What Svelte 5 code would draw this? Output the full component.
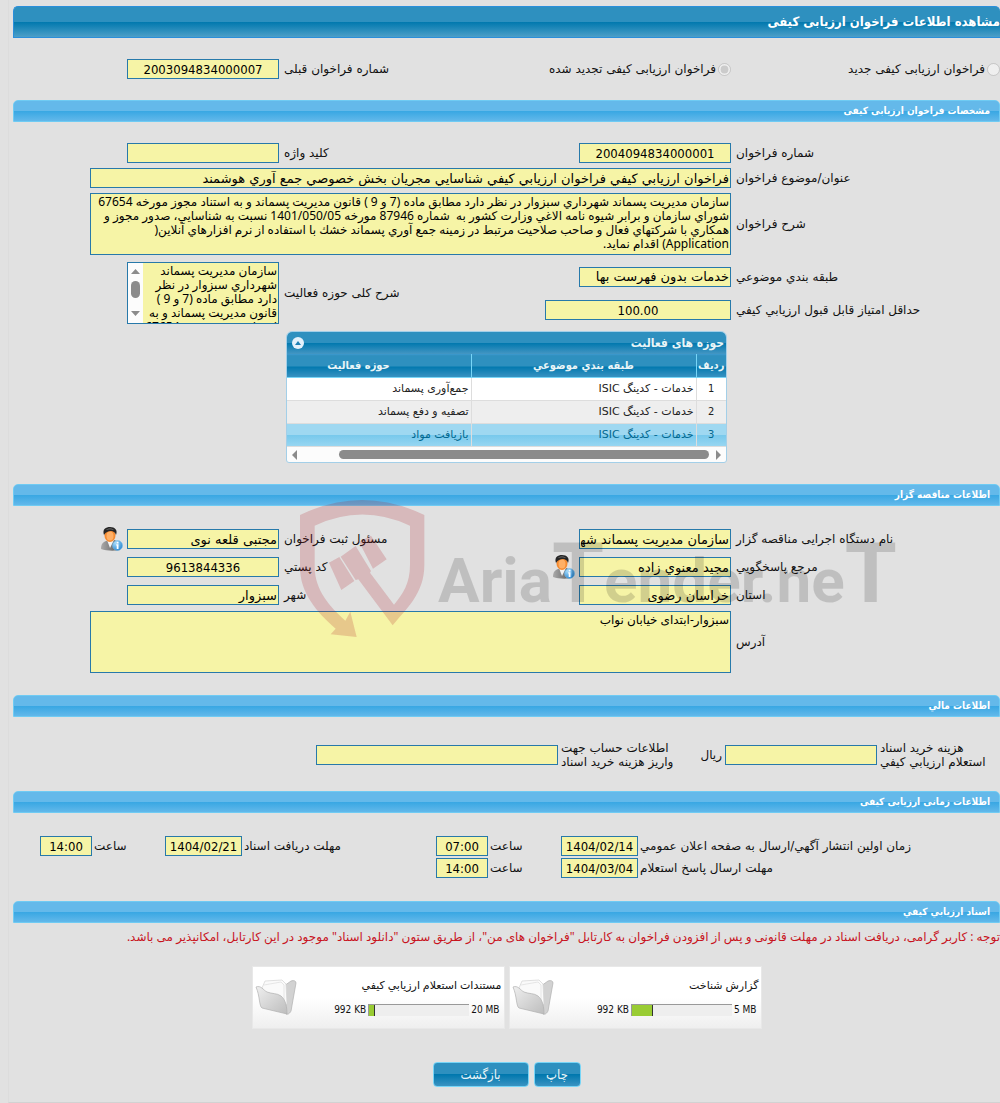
<script>
	let selectedRow = $state(3);
	let gridOpen = $state(true);

	const subject = 'فراخوان ارزيابي كيفي فراخوان ارزيابي كيفي شناسايي مجريان بخش خصوصي جمع آوري هوشمند';

	const description = [
		'سازمان مديريت پسماند شهرداري سبزوار در نظر دارد مطابق ماده (7 و 9 ) قانون مديريت پسماند و به استناد مجوز مورخه 67654',
		'شوراي سازمان و برابر شيوه نامه الاغي وزارت كشور به  شماره 87946 مورخه 1401/050/05 نسبت به شناسايي، صدور مجوز و',
		'همكاري با شركتهاي فعال و صاحب صلاحيت مرتبط در زمينه جمع آوري پسماند خشك با استفاده از نرم افزارهاي آنلاين(',
		'Application) اقدام نمايد.'
	].join('\n');

	const scope = [
		'سازمان مديريت پسماند',
		'شهرداري سبزوار در نظر',
		'دارد مطابق ماده (7 و 9 )',
		'قانون مديريت پسماند و به',
		'استناد مجوز مورخه 67654'
	].join('\n');

	const activities = [
		{ id: 1, category: 'خدمات - کدینگ ISIC', field: 'جمع‌آوری پسماند' },
		{ id: 2, category: 'خدمات - کدینگ ISIC', field: 'تصفیه و دفع پسماند' },
		{ id: 3, category: 'خدمات - کدینگ ISIC', field: 'بازیافت مواد' }
	];

	const files = [
		{ title: 'گزارش شناخت', used: '992 KB', max: '5 MB', percent: 21 },
		{ title: 'مستندات استعلام ارزيابي كيفي', used: '992 KB', max: '20 MB', percent: 6 }
	];
</script>

{#snippet userIcon(id)}
	<svg class="user-icon" viewBox="0 0 22 24" aria-hidden="true">
		<defs>
			<linearGradient id="suit-{id}" x1="0" x2="1">
				<stop offset="0" stop-color="#aaa" />
				<stop offset="1" stop-color="#555" />
			</linearGradient>
			<radialGradient id="info-{id}" cx="0.3" cy="0.25" r="0.9">
				<stop offset="0" stop-color="#a9dcfa" />
				<stop offset="1" stop-color="#1f80cf" />
			</radialGradient>
		</defs>
		<path d="M0 22c0-5 2-7 5-8l8-1c4 1 6 4 6 10-5 1-14 1-19-1z" fill="url(#suit-{id})" />
		<path d="M6 13l3 8 4-8z" fill="#f4f4f4" />
		<ellipse cx="9" cy="8.500" rx="5.500" ry="6.500" fill="#f58a2f" />
		<ellipse cx="9" cy="9" rx="3.500" ry="4.500" fill="#ffb066" />
		<path d="M3 8C1 2 5 0 9 0c5 0 8 3 6 8-1-3-3-4-5-4-3 0-5 1-7 4z" fill="#262626" />
		<path d="M5 3c2-2 6-2 8 0-3-1-5-1-8 0z" fill="#777" />
		<circle cx="16.500" cy="18.500" r="5" fill="url(#info-{id})" stroke="#6db9ea" stroke-width="0.500" />
		<path d="M15.700 14.800h1.800v1.600h-1.800zM15.200 17.200h2.300v4.800h-1.800v-3.600h-.5z" fill="#fff" />
	</svg>
{/snippet}

<main dir="rtl">
	<h1>مشاهده اطلاعات فراخوان ارزیابی کیفی</h1>

	<div class="form kind">
		<div class="radio edge">
			<input type="radio" id="kind-new" name="kind" disabled />
			<label for="kind-new">فراخوان ارزیابی کیفی جدید</label>
		</div>
		<div class="radio">
			<input type="radio" id="kind-renewed" name="kind" checked disabled />
			<label for="kind-renewed">فراخوان ارزیابی کیفی تجدید شده</label>
		</div>
		<label for="prev-number">شماره فراخوان قبلی</label>
		<input class="num" id="prev-number" value="2003094834000007" readonly />
	</div>

	<section>
		<h2>مشخصات فراخوان ارزیابی کیفی</h2>
		<div class="form details">
			<label for="number">شماره فراخوان</label>
			<input class="num" id="number" value="2004094834000001" readonly />
			<label for="keyword">کلید واژه</label>
			<input id="keyword" value="" readonly />

			<label for="subject">عنوان/موضوع فراخوان</label>
			<input class="full" id="subject" value={subject} readonly />

			<label for="description">شرح فراخوان</label>
			<textarea class="full" id="description" value={description} readonly></textarea>
		</div>

		<div class="form scope">
			<label for="category">طبقه بندي موضوعي</label>
			<input id="category" value="خدمات بدون فهرست بها" readonly />
			<label class="tall" for="scope">شرح کلی حوزه فعالیت</label>
			<div class="scroll-box tall">
				<textarea id="scope" value={scope} readonly></textarea>
				<svg class="v-scroll" viewBox="0 0 15 60" aria-hidden="true">
					<path d="M3 11l4.500-5 4.500 5zM3 48l4.500 5 4.500-5z" fill="#8b8b8b" />
					<rect x="3" y="18" width="9" height="17" rx="4.500" fill="#8b8b8b" />
				</svg>
			</div>

			<label for="min-score">حداقل امتیاز قابل قبول ارزیابي کیفي</label>
			<input class="num wide" id="min-score" value="100.00" readonly />
		</div>

		<div class="panel">
			<div class="panel-title">
				<span>حوزه های فعالیت</span>
				<button class="toggle" aria-label="بستن" onclick={() => (gridOpen = !gridOpen)}>
					<svg viewBox="0 0 12 12"><path d="M3 8l3-4 3 4z" fill="#1d7fb4" /></svg>
				</button>
			</div>
			{#if gridOpen}
				<div class="table-view">
					<table>
						<colgroup>
							<col class="c-row" />
							<col class="c-wide" />
							<col class="c-wide" />
						</colgroup>
						<thead>
							<tr>
								<th>ردیف</th>
								<th>طبقه بندي موضوعي</th>
								<th>حوزه فعالیت</th>
							</tr>
						</thead>
						<tbody>
							{#each activities as item (item.id)}
								<tr class:selected={selectedRow === item.id} onclick={() => (selectedRow = item.id)}>
									<td class="center">{item.id}</td>
									<td>{item.category}</td>
									<td>{item.field}</td>
								</tr>
							{/each}
						</tbody>
					</table>
				</div>
				<div class="h-scroll">
					<i class="arrow right"></i>
					<div class="track"><div class="thumb"></div></div>
					<i class="arrow left"></i>
				</div>
			{/if}
		</div>
	</section>

	<section class="tender">
		<h2>اطلاعات مناقصه گزار</h2>
		<div class="form owner">
			<label for="org">نام دستگاه اجرایی مناقصه گزار</label>
			<input id="org" value="سازمان مدیریت پسماند شهرداری سبزوار" readonly />
			<label for="registrar">مسئول ثبت فراخوان</label>
			<div class="with-icon">
				<input id="registrar" value="مجتبی قلعه نوی" readonly />
				{@render userIcon('registrar')}
			</div>

			<label for="contact">مرجع پاسخگویي</label>
			<div class="with-icon">
				<input id="contact" value="مجید معنوي زاده" readonly />
				{@render userIcon('contact')}
			</div>
			<label for="postal">کد پستي</label>
			<input class="num" id="postal" value="9613844336" readonly />

			<label for="province">استان</label>
			<input id="province" value="خراسان رضوی" readonly />
			<label for="city">شهر</label>
			<input id="city" value="سبزوار" readonly />

			<label for="address">آدرس</label>
			<textarea class="full" id="address" value="سبزوار-ابتدای خیابان نواب" readonly></textarea>
		</div>

		<svg class="watermark" viewBox="0 0 630 150" aria-hidden="true">
			<g transform="scale(0.3333)" fill="#b01825" fill-opacity="0.2">
				<path d="M30 75Q217-15 403 75V225C403 310 350 355 308 406L205 268 197 270 152 200 197 168 243 243 240 248 312 344C340 310 360 280 360 225V107Q217 40 74 107V230C74 300 120 350 166 392L181 365 200 441 122 433 137 416C80 365 30 310 30 230Z" />
				<path d="M117 218l31-17 45 72-39 27zM207 155l36-18 47 71-41 28z" />
			</g>
			<text x="148" y="112">Aria<tspan class="big">T</tspan>ender.ne<tspan class="big">T</tspan></text>
		</svg>
	</section>

	<section>
		<h2>اطلاعات مالي</h2>
		<div class="finance">
			<label for="doc-cost">هزینه خرید اسناد<br />استعلام ارزیابي کیفي</label>
			<input id="doc-cost" value="" readonly />
			<span class="unit">ریال</span>
			<label for="account">اطلاعات حساب جهت<br />واریز هزینه خرید اسناد</label>
			<input class="account" id="account" value="" readonly />
		</div>
	</section>

	<section>
		<h2>اطلاعات زمانی ارزیابی کیفی</h2>
		<div class="dates">
			<label for="publish-date">زمان اولین انتشار آگهي/ارسال به صفحه اعلان عمومي</label>
			<input class="num" id="publish-date" value="1404/02/14" readonly />
			<label for="publish-time">ساعت</label>
			<input class="num" id="publish-time" value="07:00" readonly />
			<label for="receive-date">مهلت دریافت اسناد</label>
			<input class="num" id="receive-date" value="1404/02/21" readonly />
			<label for="receive-time">ساعت</label>
			<input class="num" id="receive-time" value="14:00" readonly />

			<label for="reply-date">مهلت ارسال پاسخ استعلام</label>
			<input class="num" id="reply-date" value="1404/03/04" readonly />
			<label for="reply-time">ساعت</label>
			<input class="num" id="reply-time" value="14:00" readonly />
		</div>
	</section>

	<section>
		<h2>اسناد ارزیابي کیفي</h2>
		<p class="notice">
			توجه : کاربر گرامی، دریافت اسناد در مهلت قانونی و پس از افزودن فراخوان به کارتابل "فراخوان های من"، از طریق ستون "دانلود اسناد" موجود در این کارتابل، امکانپذیر می باشد.
		</p>

		<div class="files">
			{#each files as file, i}
				<article class="file">
					<div class="file-info">
						<h3>{file.title}</h3>
						<div class="usage">
							<span dir="ltr">{file.max}</span>
							<div class="bar"><div class="fill" style="width: {file.percent}%"></div></div>
							<span dir="ltr">{file.used}</span>
						</div>
					</div>
					<svg class="folder" viewBox="0 0 42 38" aria-hidden="true">
						<defs>
							<linearGradient id="folder-{i}" x1="0" y1="0" x2="1" y2="1">
								<stop offset="0" stop-color="#efefef" />
								<stop offset="1" stop-color="#bdbdbd" />
							</linearGradient>
						</defs>
						<path d="M29 8l7-5c3-1 5 0 5 2l-5 28c-1 2-3 4-5 3z" fill="#d2d2d2" stroke="#b0b0b0" stroke-width="0.700" />
						<path d="M7 10l3-7 17-1 4 4 1 20-10 4-14-9z" fill="#fafafa" stroke="#d2d2d2" stroke-width="0.700" />
						<path d="M9 7l17-3 3 3v15" fill="none" stroke="#ddd" stroke-width="0.700" />
						<path d="M1 9c5-2 7 3 11 5 5 2 10 1 14 4 5 4 6 12 6 18L7 30C4 28 5 18 1 9z" fill="url(#folder-{i})" stroke="#b0b0b0" stroke-width="0.700" />
					</svg>
				</article>
			{/each}
		</div>
	</section>

	<footer>
		<button class="btn">چاپ</button>
		<button class="btn large">بازگشت</button>
	</footer>
</main>

<style>
	:global(body) {
		margin: 0;
		background: #e1e1e1;
	}

	main {
		--condensed: 'DejaVu Sans Condensed', 'DejaVu Sans', sans-serif;
		--mixed: 'Noto Sans', 'DejaVu Sans', sans-serif;
		margin-left: 8px;
		padding: 6px 0 15px 4px;
		border-left: 1px solid #dcdcdc;
		border-bottom: 1px solid #d2d2d2;
		font-family: 'DejaVu Sans', sans-serif;
		font-size: 12px;
		line-height: 14px;
		color: #111;
		overflow: hidden;
	}

	h1,
	h2,
	h3,
	p {
		margin: 0;
	}

	h1 {
		height: 32px;
		box-sizing: border-box;
		border: 1px solid #2a8fdb;
		border-right: 0;
		border-radius: 5px 5px 0 0;
		background: linear-gradient(#2e90bf 50%, #0078ae 50%, #4c9fc8);
		color: #fff;
		font-family: var(--condensed);
		font-size: 13px;
		line-height: 30px;
	}

	h2 {
		height: 22px;
		box-sizing: border-box;
		padding-right: 9px;
		border: 1px solid #6fcbf3;
		border-radius: 5px 5px 0 0;
		background: linear-gradient(#64b9ea 50%, #38a7e3 50%, #62b8ea);
		color: #fff;
		font-family: var(--condensed);
		font-size: 10px;
		line-height: 20px;
	}

	section {
		position: relative;
	}

	label {
		text-align: left;
		white-space: nowrap;
	}

	input,
	textarea {
		box-sizing: border-box;
		margin: 0;
		padding: 0 1px;
		border: 1px solid #2779aa;
		border-radius: 0;
		outline: none;
		background: #f6f4a6;
		color: #000;
		font-family: inherit;
		font-size: 13px;
	}

	input {
		width: 152px;
		height: 20px;
	}

	textarea {
		height: 62px;
		padding: 1px;
		font-family: var(--mixed);
		font-size: 12px;
		line-height: 14px;
		resize: none;
		overflow: hidden;
		white-space: pre;
	}

	.num {
		direction: ltr;
		font-family: var(--condensed);
		text-align: center;
	}

	.form {
		display: grid;
		grid-template-columns: 264fr 322fr 120fr 266fr;
		gap: 5px;
		align-items: center;
	}

	.form > * {
		min-width: 0;
	}

	.kind {
		padding: 21px 0;
	}

	.radio {
		display: flex;
		align-items: center;
		gap: 2px;
	}

	.radio input {
		width: 13px;
		height: 13px;
	}

	.full {
		grid-column: 2 / 5;
		width: 641px;
	}

	.details {
		padding-top: 21px;
	}

	.scope {
		grid-template-rows: 29px 28px;
		padding-top: 7px;
	}

	.tall {
		grid-row: 1 / 3;
	}

	label.tall {
		grid-column: 3;
	}

	.scroll-box {
		grid-column: 4;
		display: flex;
		width: 152px;
		height: 62px;
		box-sizing: border-box;
		border: 1px solid #2779aa;
	}

	.scroll-box textarea {
		flex: 1;
		min-width: 0;
		height: 60px;
		border: 0;
	}

	.v-scroll {
		width: 15px;
		background: #fcfcfc;
	}

	.wide {
		width: 186px;
	}

	.panel {
		width: 441px;
		box-sizing: border-box;
		margin: 7px auto 21px;
		border: 1px solid #a3cfe8;
		border-radius: 6px 6px 3px 3px;
		background: #fcfcfc;
		overflow: hidden;
	}

	.panel-title {
		display: flex;
		align-items: center;
		justify-content: space-between;
		height: 22px;
		padding: 0 2px 0 5px;
		background: linear-gradient(#2e90bf 50%, #0078ae 50%, #4496c3);
		color: #eaf5f7;
		font-family: var(--condensed);
		font-weight: bold;
	}

	.toggle {
		width: 12px;
		height: 12px;
		padding: 0;
		border: 0;
		border-radius: 50%;
		background: #e4f1fb;
	}

	.toggle svg {
		display: block;
	}

	.table-view {
		overflow: hidden;
	}

	table {
		width: 480px;
		table-layout: fixed;
		border-collapse: collapse;
		font-size: 11px;
	}

	.c-row {
		width: 30px;
	}

	.c-wide {
		width: 225px;
	}

	th,
	td {
		height: 23px;
		box-sizing: border-box;
		padding: 0 2px;
		border-left: 1px solid #ddd;
		border-bottom: 1px solid #ddd;
		text-align: right;
		white-space: nowrap;
	}

	th {
		padding: 0;
		border-color: #77d5f7;
		border-top: 1px solid #3997cb;
		background: linear-gradient(#2e90bf 50%, #0078ae 50%, #3a93c2);
		color: #eaf5f7;
		font-family: var(--condensed);
		text-align: center;
	}

	td.center {
		font-family: var(--condensed);
		text-align: center;
	}

	tbody tr {
		background: #fff;
		color: #222;
	}

	tbody tr:nth-child(even) {
		background: #eee;
	}

	tbody tr.selected {
		background: linear-gradient(#9fd8f1 50%, #79c9ec 50%, #9ad7f2);
		color: #026890;
	}

	.h-scroll {
		display: flex;
		align-items: center;
		justify-content: space-between;
		height: 15px;
		padding: 0 5px;
	}

	.track {
		flex: 1;
		padding: 0 7px;
	}

	.thumb {
		width: 370px;
		height: 9px;
		border-radius: 5px;
		background: #8b8b8b;
	}

	.arrow {
		border: 5px solid transparent;
	}

	.arrow.right {
		border-right: 0;
		border-left-color: #8b8b8b;
	}

	.arrow.left {
		border-left: 0;
		border-right-color: #8b8b8b;
	}

	.owner {
		grid-auto-rows: minmax(24px, auto);
		row-gap: 4px;
		padding: 21px 0 22px;
	}

	.with-icon {
		display: flex;
		align-items: center;
		gap: 4px;
	}

	.user-icon {
		width: 22px;
		height: 24px;
	}

	/* brand overlay, sits across the owner form */
	.watermark {
		position: absolute;
		left: 277px;
		top: 6px;
		width: 630px;
		height: 150px;
		pointer-events: none;
	}

	.watermark text {
		direction: ltr;
		font-family: Roboto, sans-serif;
		font-size: 62px;
		font-weight: bold;
		fill: #000;
		fill-opacity: 0.15;
	}

	.watermark .big {
		font-size: 84px;
	}

	.finance {
		display: flex;
		align-items: center;
		gap: 3px;
		padding: 24px 0 22px;
	}

	.finance label {
		width: 120px;
	}

	.unit {
		width: 38px;
	}

	.finance .account {
		width: 242px;
	}

	.dates {
		display: grid;
		grid-template-columns: 360fr 77px 69fr 52px 190fr 77px 69fr 52px 25fr;
		gap: 2px;
		align-items: center;
		padding: 23px 0;
	}

	.dates input {
		width: 100%;
	}

	.dates label:nth-of-type(5) {
		grid-column: 1;
	}

	.notice {
		padding: 7px 0 22px;
		color: #c8141e;
		font-family: var(--mixed);
		white-space: nowrap;
	}

	.files {
		display: flex;
		justify-content: center;
		gap: 4px;
	}

	.file {
		display: flex;
		width: 253px;
		height: 63px;
		box-sizing: border-box;
		padding: 11px 2px;
		border: 1px solid #e8e8e8;
		background: linear-gradient(#fff 50%, #efefef);
	}

	.file-info {
		flex: 1;
	}

	h3 {
		font-family: var(--mixed);
		font-size: 11px;
		font-weight: normal;
	}

	.usage {
		display: flex;
		align-items: center;
		gap: 2px;
		margin-top: 11px;
		padding-right: 2px;
		font-family: var(--condensed);
		font-size: 10px;
	}

	.bar {
		direction: ltr;
		width: 100px;
		height: 11px;
		border-top: 1px solid #999;
		border-left: 1px solid #999;
		background: #eee;
	}

	.fill {
		height: 100%;
		box-sizing: border-box;
		border-right: 1px solid #333;
		background: #9c3;
	}

	.folder {
		width: 42px;
		height: 38px;
	}

	footer {
		display: flex;
		justify-content: center;
		gap: 5px;
		margin-top: 33px;
	}

	.btn {
		width: 47px;
		height: 25px;
		padding: 0;
		border: 1px solid #77d5f7;
		border-radius: 4px;
		background: linear-gradient(#2e90bf 50%, #0078ae 50%, #3a93c2);
		color: #eaf5f7;
		font-family: var(--condensed);
		font-size: 13px;
	}

	.btn.large {
		width: 96px;
	}
</style>
